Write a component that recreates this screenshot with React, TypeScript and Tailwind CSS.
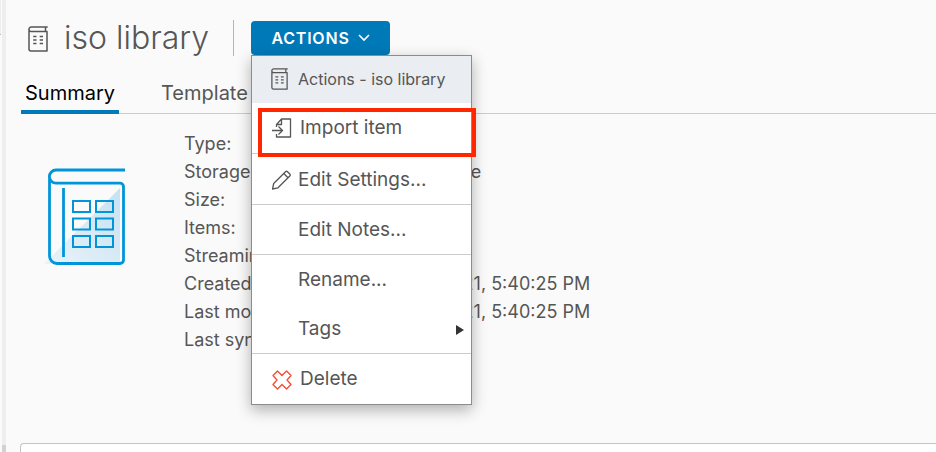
import type { ReactNode } from 'react';

function LibraryIcon({ className }: { className: string }) {
  return (
    <svg viewBox="0 0 20 26" className={className} fill="none" stroke="currentColor" strokeWidth="1.5" aria-hidden="true">
      <path d="M19.700 1H3.200A2.250 2.250 0 0 0 3.200 5.500H19V25H3a2 2 0 0 1-2-2V3.200M17.500 1v4.500" strokeLinejoin="round" />
      <path d="M5.200 10.500h3.300M5.200 14h3.300M5.200 17.500h3.300M11.700 10.500h3.300M11.700 14h3.300M11.700 17.500h3.300" />
    </svg>
  );
}

function ImportIcon() {
  return (
    <svg viewBox="0 0 20 20" className="h-5 w-5" fill="none" stroke="currentColor" strokeWidth="1.3" strokeLinejoin="round" aria-hidden="true">
      <path d="M4.500 9V6.500L9.500 1h9v18h-14v-3M9.500 1v5.500h-5M0 12.500h10.500M6.500 8.500l4 4-4 4" />
    </svg>
  );
}

function PencilIcon() {
  return (
    <svg viewBox="0 0 20 20" className="h-5 w-5" fill="none" stroke="currentColor" strokeWidth="1.3" strokeLinejoin="round" aria-hidden="true">
      <path d="M.500 19l1.200-5.500L13.500 1.700a1.500 1.500 0 0 1 2 0L17.800 4a1.500 1.500 0 0 1 0 2L6 17.800zM11.800 3.500L16 7.700" />
    </svg>
  );
}

function DeleteIcon() {
  return (
    <svg viewBox="0 0 20 20" className="h-5 w-5 text-[#f54f36]" fill="none" stroke="currentColor" strokeWidth="1.400" strokeLinejoin="round" aria-hidden="true">
      <path d="M5.500 1L10 5.500 14.500 1 19 5.500 15 10l4 4.500-4.500 4.500L10 14.500 5.500 19 1 14.500 5 10 1 5.500z" />
    </svg>
  );
}

function BookArt() {
  return (
    <svg viewBox="0 0 82 98" className="h-[98px] w-[82px]" fill="none" aria-hidden="true">
      <defs>
        <linearGradient id="page" x1="0" y1="1" x2="1" y2="0">
          <stop offset="0" stopColor="#e9f3f9" />
          <stop offset="1" stopColor="#c6e1f1" />
        </linearGradient>
      </defs>
      <path d="M0 96L76 20V93.500L72 96z" fill="url(#page)" />
      <g stroke="#0095d9" strokeWidth="2.800">
        <path d="M81 2H12A6.600 6.600 0 0 0 12 15.200H76a3.500 3.500 0 0 1 3.500 3.500V92a3.500 3.500 0 0 1-3.500 3.500H13A7.500 7.500 0 0 1 5.500 88V9" />
        <path d="M19.500 20v69" />
        <path d="M29 33h17v11H29zM52 33h17v11H52zM29 50.500h17v11H29zM52 50.500h17v11H52zM29 68h17v11H29zM52 68h17v11H52z" strokeWidth="2" />
      </g>
    </svg>
  );
}

function MenuItem({ icon, children, className = 'h-[49px] pt-0.5' }: { icon?: ReactNode; children: ReactNode; className?: string }) {
  return (
    <button type="button" role="menuitem" className={`relative flex w-full items-center pr-[7px] pl-5 text-left ${className}`}>
      <span className="flex w-[26px] shrink-0">{icon}</span>
      {children}
    </button>
  );
}

const details = [
  ['Type:', ''],
  ['Storage:', 'File storage'],
  ['Size:', ''],
  ['Items:', ''],
  ['Streaming:', ''],
  ['Created:', '05/04/2021, 5:40:25 PM'],
  ['Last modified:', '05/04/2021, 5:40:25 PM'],
  ['Last sync:', ''],
];

export default function App() {
  return (
    <div className="flex h-screen overflow-hidden bg-[#fafafa] font-[Inter,sans-serif] text-[#565656]">
      <div className="w-0.5 shrink-0">
        <div className="h-[35px] w-px border-b border-[#bbbbbb] bg-[#eeeeee]" />
      </div>
      <div className="flex w-1 shrink-0 flex-col bg-[#eeeeee]">
        <div className="mt-auto h-[7px] bg-[#d2d2d2]" />
      </div>
      <main className="flex min-w-0 flex-1 flex-col">
        <header className="flex h-[76px] items-center pl-[22px]">
          <LibraryIcon className="mt-0.5 h-[26px] w-5" />
          <h1 className="w-[185px] pl-4 text-[32px] leading-9 font-light whitespace-nowrap">iso library</h1>
          <div className="h-9 border-l border-[#b5b5b5]" />
          <div className="relative ml-[17px]">
            <button type="button" aria-haspopup="menu" aria-expanded="true" className="flex h-[34px] w-[139px] items-center justify-center gap-2 rounded bg-[#0079b8] text-base font-semibold tracking-wider text-white">
              ACTIONS
              <svg viewBox="0 0 12 8" className="h-2 w-3" fill="none" stroke="currentColor" strokeWidth="1.600" aria-hidden="true">
                <path d="M1 1l5 5 5-5" />
              </svg>
            </button>
            <div role="menu" aria-label="Actions - iso library" className="absolute top-full left-0 z-10 w-[221px] border border-[#8c8c8c] bg-white pb-px text-[19px] shadow-[0_5px_14px_rgba(0,0,0,0.3)]">
              <div className="flex h-[47px] items-center bg-[#eaedf1] pb-0.5 pl-[19px] text-base">
                <LibraryIcon className="mr-2.5 h-[22px] w-[17px]" />
                Actions - iso library
              </div>
              <MenuItem icon={<ImportIcon />} className="h-[50px]">
                <span className="pl-0.5">Import item</span>
                <span className="absolute top-[5px] left-1.5 h-[49px] w-[218px] border-4 border-[#ff2600]" />
              </MenuItem>
              <div className="border-t border-[#cccccc]">
                <MenuItem icon={<PencilIcon />} className="h-[50px] pt-0.5">Edit Settings...</MenuItem>
              </div>
              <div className="border-t border-[#cccccc]">
                <MenuItem>Edit Notes...</MenuItem>
              </div>
              <div className="border-t border-[#cccccc]">
                <MenuItem>Rename...</MenuItem>
                <MenuItem>
                  Tags
                  <svg viewBox="0 0 8 10" className="ml-auto h-2.5 w-2" fill="#333333" aria-hidden="true">
                    <path d="M0 0l8 5-8 5z" />
                  </svg>
                </MenuItem>
              </div>
              <div className="border-t border-[#cccccc]">
                <MenuItem icon={<DeleteIcon />}>
                  <span className="pl-0.5">Delete</span>
                </MenuItem>
              </div>
            </div>
          </div>
        </header>
        <nav className="ml-[15px] flex h-[38px] gap-[38px] text-xl leading-[34px] shadow-[inset_0_-1px_0_#cccccc]">
          <a href="#summary" aria-current="page" className="border-b-4 border-[#0079b8] px-1 text-black">Summary</a>
          <a href="#template" className="px-1">Template</a>
        </nav>
        <section className="flex pt-4 pl-[38px]">
          <div className="w-[140px] shrink-0 pt-[38px]">
            <BookArt />
          </div>
          <dl className="text-lg leading-7">
            {details.map(([label, value]) => (
              <div key={label} className="flex">
                <dt className="w-[198px]">{label}</dt>
                <dd className="whitespace-nowrap">{value}</dd>
              </div>
            ))}
          </dl>
        </section>
        <section className="mt-auto ml-3.5 h-[9px] rounded-tl border-t border-l border-[#c4c4c4] bg-white" />
      </main>
    </div>
  );
}
